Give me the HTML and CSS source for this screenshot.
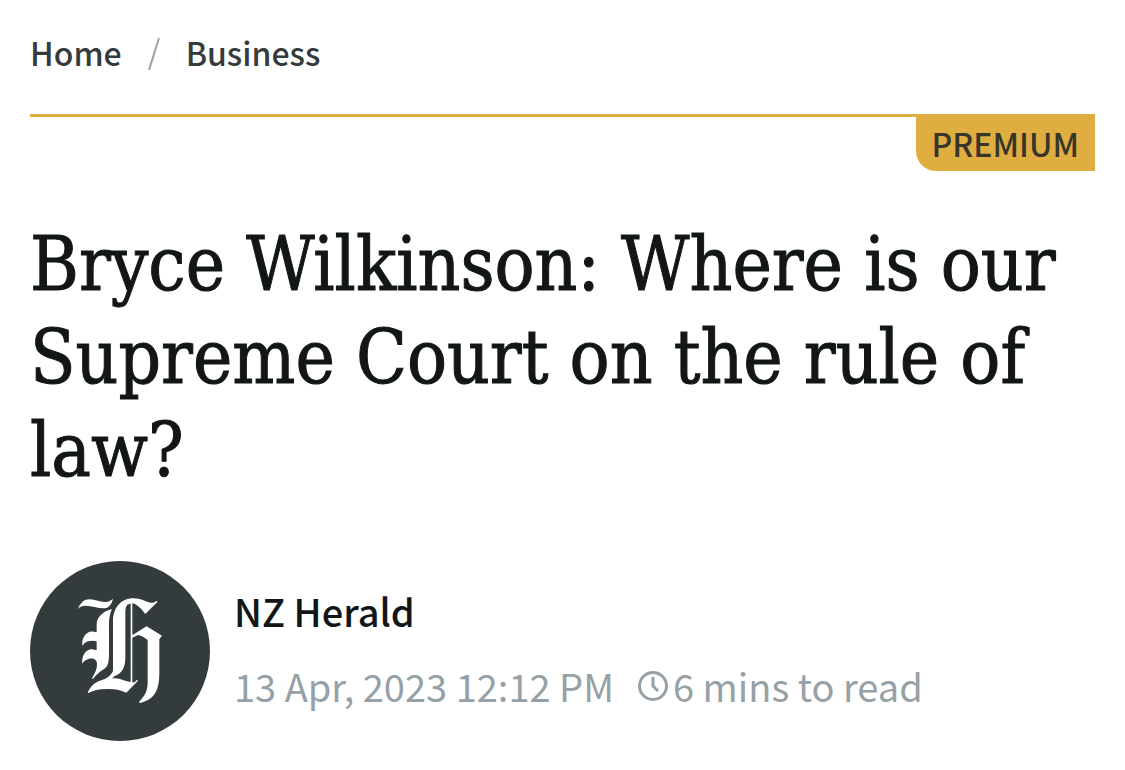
FILE: index.html
```html
<!DOCTYPE html>
<html lang="en-NZ">
<head>
<meta charset="utf-8">
<meta name="viewport" content="width=device-width, initial-scale=1">
<title>Bryce Wilkinson: Where is our Supreme Court on the rule of law?</title>
<link rel="stylesheet" href="styles.css">
</head>
<body>
<main class="article">
  <nav class="breadcrumb" aria-label="Breadcrumb">
    <a href="#">Home</a>
    <svg class="separator" viewBox="0 0 12 32" aria-hidden="true"><path d="M11 0 1 32"/></svg>
    <a href="#">Business</a>
  </nav>
  <div class="rule"><span class="tag">PREMIUM</span></div>
  <h1 class="headline">Bryce Wilkinson: Where is our Supreme Court on the rule of law?</h1>
  <div class="byline">
    <svg class="avatar" viewBox="-120 -87 540 540" role="img" aria-label="NZ Herald logo">
      <circle class="avatar-bg" cx="150" cy="183" r="270"/>
      <path d="M24 57C32 37 43 28 59 28C76 28 89 37 106 36C116 35 123 31 129 26C125 42 117 55 101 55C83 55 65 47 47 47C37 47 30 50 24 57Z"/>
      <path d="M126 57C116 78 117 96 117 124V191C117 218 114 229 101 238C88 246 78 255 68 268L66 265C74 250 81 239 81 222C81 209 70 204 58 206C48 208 42 212 37 221C34 200 46 179 63 178C70 177 75 180 80 181V154C73 151 62 152 54 154C46 156 41 161 38 167C33 151 44 129 60 125C67 123 74 125 80 127V103C80 79 103 63 126 57Z"/>
      <path d="M259 33L263 35L226 72C215 58 200 41 187 40V277C190 278 194 278 201 269L204 272L169 308C151 300 135 297 116 297C91 296 71 300 53 310C58 292 74 276 94 271C111 265 123 256 128 245C130 240 129 232 129 225V94C129 55 151 25 191 25C216 25 227 37 242 38C249 39 254 37 259 33ZM180 41C167 43 166 55 166 73V204C166 235 153 250 139 256C132 259 129 262 127 266C144 260 164 274 182 276V41Z"/>
      <path d="M184 137L230 109L276 137L268 147V246C268 300 256 327 210 339L207 336C224 317 233 304 233 275V151C226 144 215 137 204 135L184 145Z"/>
    </svg>
    <div class="details">
      <a class="author" href="#">NZ Herald</a>
      <div class="meta">
        <time datetime="2023-04-13T12:12">13 Apr, 2023 12:12 PM</time>
        <span class="reading"><svg class="clock" viewBox="0 0 30 30" aria-hidden="true"><circle cx="15" cy="15" r="13.5"/><path d="M15 6V15L20 20"/></svg>6 mins to read</span>
      </div>
    </div>
  </div>
</main>
</body>
</html>
```
FILE: styles.css
```css
* {
  box-sizing: border-box;
}

body {
  margin: 0;
  background: #fff;
  color: #121617;
  font-family: "Noto Sans CJK SC", "Open Sans", sans-serif;
}

a {
  color: inherit;
  text-decoration: none;
}

.article {
  padding: 28px 30px;
}

.breadcrumb {
  display: flex;
  align-items: center;
  gap: 26px;
  margin-bottom: 38px;
  color: #333b3d;
  font-size: 32px;
  font-weight: 500;
  line-height: 48px;
}

.separator {
  width: 12px;
  height: 32px;
  margin-top: 4px;
  fill: none;
  stroke: #9aa4aa;
  stroke-width: 2;
}

.rule {
  display: flex;
  justify-content: flex-end;
  border-top: 3px solid #e0ae40;
}

.tag {
  padding: 2px 16px 4px;
  border-bottom-left-radius: 20px;
  background: #e0ae40;
  color: #38352b;
  font-size: 32px;
  font-weight: 500;
  line-height: 48px;
}

.headline {
  margin: 47px 0 64px;
  font-family: "DejaVu Serif Condensed", "DejaVu Serif", serif;
  font-size: 74px;
  font-weight: 400;
  line-height: 93px;
  -webkit-text-stroke: 1px currentColor;
}

.byline {
  display: flex;
  align-items: center;
  gap: 24px;
}

.avatar {
  flex: none;
  width: 180px;
  height: 180px;
  fill: #fff;
}

.avatar-bg {
  fill: #333b3d;
}

.details {
  display: flex;
  flex-direction: column;
  gap: 20px;
  padding-bottom: 6px;
}

.author {
  font-size: 38px;
  font-weight: 500;
  line-height: 55px;
}

.meta {
  display: flex;
  flex-wrap: wrap;
  column-gap: 24px;
  color: #96a1a7;
  font-size: 38px;
  line-height: 55px;
}

.reading {
  display: flex;
  align-items: center;
  gap: 5px;
}

.clock {
  width: 30px;
  height: 30px;
  fill: none;
  stroke: currentColor;
  stroke-width: 3;
}
```
